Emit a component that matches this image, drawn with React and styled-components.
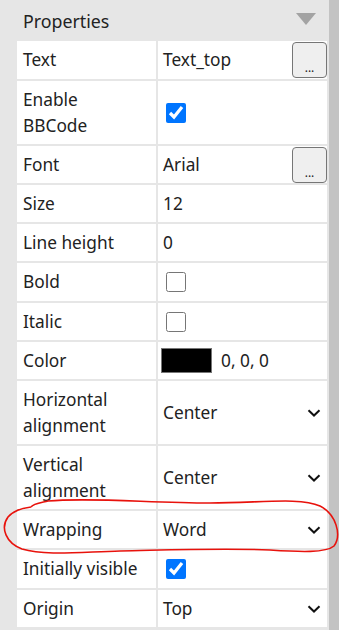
import styled, { createGlobalStyle } from 'styled-components';

const Global = createGlobalStyle`
    html, body {
        margin: 0;
        padding: 0;
        background: #e6e6e6;
    }
    body {
        font-family: "Noto Sans", "Open Sans", sans-serif;
        color: #222;
    }
`;

const Page = styled.div`
    position: relative;
    display: flex;
    flex-flow: row nowrap;
    width: 339px;
    height: 630px;
    overflow: hidden;
`;

const Panel = styled.div`
    width: 329px;
    display: flex;
    flex-flow: column nowrap;
`;

const ScrollBar = styled.div`
    width: 10px;
    background: #c3c3c3;
`;

const Header = styled.div`
    height: 41px;
    flex: none;
    display: flex;
    align-items: center;
    justify-content: space-between;
    padding: 0 13px 0 23px;
    box-sizing: border-box;
    font-size: 17.8px;
`;

const Collapse = styled.div`
    width: 0;
    height: 0;
    border-left: 10px solid transparent;
    border-right: 10px solid transparent;
    border-top: 12px solid #a3a3a3;
    margin-top: -4px;
`;

const Grid = styled.div`
    margin-left: 17px;
    width: 310px;
    display: grid;
    grid-template-columns: 139px 169px;
    gap: 2px;
    font-size: 17.3px;
    line-height: 24px;
`;

const Label = styled.div`
    background: #fff;
    height: ${({ h }) => h || 37}px;
    line-height: ${({ h }) => h > 40 ? '26px' : '24px'};
    padding: 0 6px;
    box-sizing: border-box;
    display: flex;
    align-items: center;
    white-space: nowrap;
`;

const Value = styled.div`
    background: #fff;
    padding-left: ${({ inset }) => inset || '5px'};
    box-sizing: border-box;
    display: flex;
    align-items: center;
    gap: 9px;
`;

const Grow = styled.span`
    flex: 1;
`;

const DotsButton = styled.button`
    width: 35px;
    height: 36px;
    margin: 1px 0 0 0;
    align-self: flex-start;
    border: 1px solid #767676;
    border-radius: 4px;
    background: #efefef;
    font-family: "Noto Sans", sans-serif;
    font-size: 12px;
    color: #222;
    padding: 14px 0 0 0;
`;

const Check = styled.input`
    width: 20px;
    height: 20px;
    margin: 0 0 0 3px;
    accent-color: #0075ff;
`;

const Swatch = styled.div`
    width: 49px;
    height: 23px;
    background: #000;
    border: 1px solid #767676;
`;

const Chevron = styled.svg`
    width: 14px;
    height: 8px;
    margin-right: 6px;
`;

const Scribble = styled.svg`
    position: absolute;
    left: 0;
    top: 0;
    pointer-events: none;
`;

const Dots = () => <DotsButton>...</DotsButton>;

const Select = ({ value }) => (
    <Value>
        <Grow>{value}</Grow>
        <Chevron viewBox="0 0 14 8">
            <polyline points="1.5,1.2 7,6.5 12.5,1.2" fill="none" stroke="#111" strokeWidth="2" />
        </Chevron>
    </Value>
);

const App = () => {
    return (
        <Page>
            <Global />
            <Panel>
                <Header>
                    <span>Properties</span>
                    <Collapse />
                </Header>
                <Grid>
                    <Label h={38}>Text</Label>
                    <Value><Grow>Text_top</Grow><Dots /></Value>

                    <Label h={63}>Enable<br />BBCode</Label>
                    <Value><Check type="checkbox" defaultChecked /></Value>

                    <Label>Font</Label>
                    <Value><Grow>Arial</Grow><Dots /></Value>

                    <Label>Size</Label>
                    <Value>12</Value>

                    <Label>Line height</Label>
                    <Value>0</Value>

                    <Label h={38}>Bold</Label>
                    <Value><Check type="checkbox" /></Value>

                    <Label>Italic</Label>
                    <Value><Check type="checkbox" /></Value>

                    <Label>Color</Label>
                    <Value inset="3px"><Swatch /><span>0, 0, 0</span></Value>

                    <Label h={63}>Horizontal<br />alignment</Label>
                    <Select value="Center" />

                    <Label h={63}>Vertical<br />alignment</Label>
                    <Select value="Center" />

                    <Label>Wrapping</Label>
                    <Select value="Word" />

                    <Label h={38}>Initially visible</Label>
                    <Value><Check type="checkbox" defaultChecked /></Value>

                    <Label>Origin</Label>
                    <Select value="Top" />
                </Grid>
            </Panel>
            <ScrollBar />
            <Scribble width="339" height="630" viewBox="0 0 339 630">
                <path
                    d="M31 507 C 33 504, 40 503, 48 501 C 90 497, 150 503, 210 503 C 260 503, 300 497, 320 506 C 336 514, 342 535, 334 546 C 326 553, 300 552, 270 550 C 220 548, 170 550, 120 551 C 80 552, 45 556, 22 549 C 6 543, 0 528, 8 517 C 14 510, 22 508, 31 507"
                    fill="none"
                    stroke="#e8120c"
                    strokeWidth="1.6"
                />
            </Scribble>
        </Page>
    );
};

export default App;
